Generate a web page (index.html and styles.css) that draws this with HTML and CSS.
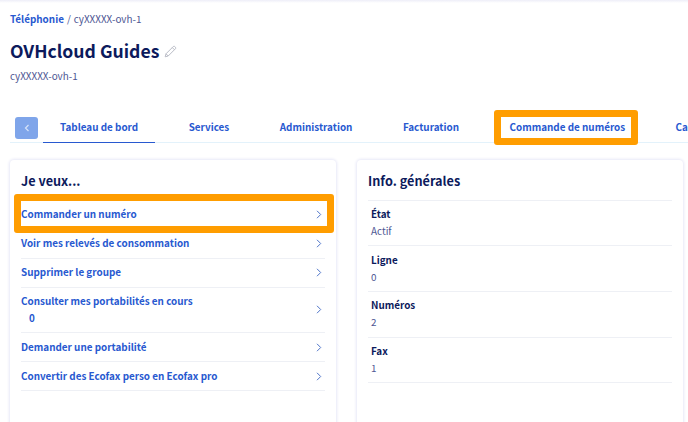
FILE: index.html
```html
<!DOCTYPE html>
<html lang="fr">
<head>
<meta charset="utf-8">
<title>OVHcloud Guides</title>
<link rel="stylesheet" href="styles.css">
</head>
<body>
<div class="topshade"></div>
<main class="page">
  <nav class="crumbs"><a class="crumb-link">Téléphonie</a><span class="crumb-sep">/</span><span>cyXXXXX-ovh-1</span></nav>
  <div class="title-row">
    <h1 class="title">OVHcloud Guides</h1>
    <svg class="pencil" width="13" height="13" viewBox="0 0 13 13" fill="none" stroke="#b9bcc6" stroke-width="1"><path d="M1.2 11.8l.8-3L9.3 1.5a1 1 0 0 1 1.4 0l.8.8a1 1 0 0 1 0 1.4L4.2 11z"/><path d="M8.3 2.6l2.1 2.1M2 8.8L4.2 11"/></svg>
  </div>
  <p class="subtitle">cyXXXXX-ovh-1</p>
  <div class="tabs">
    <button class="tab-back"><svg width="6" height="8" viewBox="0 0 6 8" fill="none" stroke="#d5e2f8" stroke-width="1.2"><path d="M4.5 1L1.5 4l3 3"/></svg></button>
    <a class="tab tab-active">Tableau de bord</a>
    <a class="tab">Services</a>
    <a class="tab">Administration</a>
    <a class="tab">Facturation</a>
    <a class="tab tab-marked">Commande de numéros</a>
    <a class="tab">Carte</a>
  </div>
  <div class="cards">
    <section class="card">
      <h2 class="card-title">Je veux...</h2>
      <ul class="actions">
        <li class="action action-marked"><span>Commander un numéro</span><svg class="chev" width="6" height="9" viewBox="0 0 6 9" fill="none" stroke="#4f75c9" stroke-width="1"><path d="M1 .8l3.7 3.7L1 8.2"/></svg></li>
        <li class="action"><span>Voir mes relevés de consommation</span><svg class="chev" width="6" height="9" viewBox="0 0 6 9" fill="none" stroke="#4f75c9" stroke-width="1"><path d="M1 .8l3.7 3.7L1 8.2"/></svg></li>
        <li class="action"><span>Supprimer le groupe</span><svg class="chev" width="6" height="9" viewBox="0 0 6 9" fill="none" stroke="#4f75c9" stroke-width="1"><path d="M1 .8l3.7 3.7L1 8.2"/></svg></li>
        <li class="action action-tall"><span>Consulter mes portabilités en cours<span class="count">0</span></span><svg class="chev" width="6" height="9" viewBox="0 0 6 9" fill="none" stroke="#4f75c9" stroke-width="1"><path d="M1 .8l3.7 3.7L1 8.2"/></svg></li>
        <li class="action"><span>Demander une portabilité</span><svg class="chev" width="6" height="9" viewBox="0 0 6 9" fill="none" stroke="#4f75c9" stroke-width="1"><path d="M1 .8l3.7 3.7L1 8.2"/></svg></li>
        <li class="action"><span>Convertir des Ecofax perso en Ecofax pro</span><svg class="chev" width="6" height="9" viewBox="0 0 6 9" fill="none" stroke="#4f75c9" stroke-width="1"><path d="M1 .8l3.7 3.7L1 8.2"/></svg></li>
      </ul>
    </section>
    <section class="card">
      <h2 class="card-title card-title-ruled">Info. générales</h2>
      <dl class="facts">
        <div class="fact"><dt>État</dt><dd>Actif</dd></div>
        <div class="fact"><dt>Ligne</dt><dd>0</dd></div>
        <div class="fact"><dt>Numéros</dt><dd>2</dd></div>
        <div class="fact"><dt>Fax</dt><dd>1</dd></div>
      </dl>
    </section>
  </div>
</main>
</body>
</html>
```

FILE: styles.css
```css
*, *::after { box-sizing: border-box; }
html, body { margin: 0; height: 100%; overflow: hidden; background: #fff; }
body {
  font-family: "Noto Sans CJK SC", "Source Sans Pro", "Noto Sans", sans-serif;
  font-size: 9.9px;
  line-height: 17px;
  color: #4d5693;
}
.topshade { height: 3px; background: linear-gradient(#eeeef8, #fff); }
.page { padding: 8px 10px 0; width: 688px; }
.crumbs { display: flex; gap: 3px; height: 17px; }
.crumb-link { color: #2859d0; font-weight: 700; }
.title-row { display: flex; align-items: center; gap: 5px; margin-top: 11px; height: 24px; }
.title { margin: 0; font-size: 17.6px; line-height: 24px; font-weight: 700; color: #0c1a5c; }
.pencil { margin-top: 1px; }
.subtitle { margin: 5px 0 0; height: 17px; }
.tabs {
  display: flex;
  align-items: flex-start;
  gap: 16.5px;
  margin-top: 32px;
  padding-left: 5px;
  height: 26px;
  width: 800px;
  border-bottom: 1px solid #e3f2fb;
  position: relative;
}
.tab-back {
  width: 23px;
  height: 22px;
  margin: 0 -11.5px 0 0;
  padding: 0;
  border: 0;
  border-radius: 3px;
  background: #7fa5ea;
  display: flex;
  align-items: center;
  justify-content: center;
  flex: none;
}
.tab {
  padding: 2px 17px 0;
  height: 25px;
  color: #2859d0;
  font-weight: 700;
  flex: none;
  position: relative;
}
.tab-active { border-bottom: 1px solid #2859d0; height: 26px; }
.tab-marked::after {
  content: "";
  position: absolute;
  left: 2px;
  right: 4px;
  top: -7px;
  height: 35px;
  border: 7px solid #ff9d00;
  border-radius: 3px;
}
.cards { display: grid; grid-template-columns: 326px 326px; gap: 21px; margin-top: 17px; }
.card {
  height: 300px;
  padding: 9px 11px;
  background: #fff;
  border-radius: 4px;
  box-shadow: 0 0 3px 1px #e7e8f7;
}
.card-title { margin: 0; font-size: 12.7px; line-height: 23px; font-weight: 700; color: #0c1a5c; height: 32px; }
.card-title-ruled { border-bottom: 1px solid #eef0f5; }
.actions { list-style: none; margin: 0; padding: 0; }
.action {
  display: flex;
  align-items: center;
  justify-content: space-between;
  min-height: 29px;
  padding: 0 3px 1px 0;
  border-bottom: 1px solid #eef0f5;
  color: #2859d0;
  font-weight: 700;
  position: relative;
}
.action-tall { min-height: 45px; }
.action-tall ~ .action { padding-bottom: 0; }
.count { display: block; padding-left: 8px; color: #2859d0; }
.action-marked { border-bottom: 0; padding-bottom: 2px; }
.action-marked::after {
  content: "";
  position: absolute;
  left: -7px;
  right: -9px;
  top: -7px;
  height: 39px;
  border: 7px solid #ff9d00;
  border-radius: 3px;
}
.facts { margin: -0.4px 0 0; }
.fact { height: 45.67px; padding: 5.4px 3px 0; border-bottom: 1px solid #eef0f5; }
.fact dt { font-weight: 700; color: #0c1a5c; }
.fact dd { margin: 0; }
```
